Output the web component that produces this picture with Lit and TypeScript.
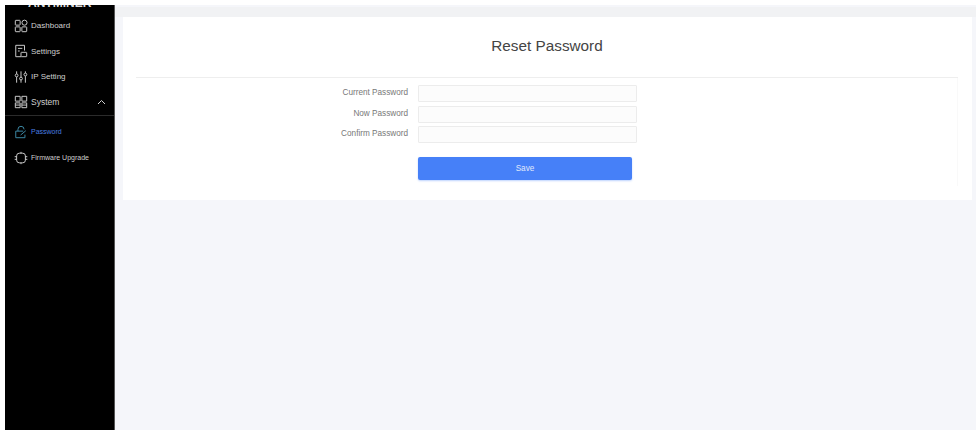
import { LitElement, html, css, svg } from "lit";
import { customElement } from "lit/decorators.js";

const ic = (body: unknown, size = 14) => html`<svg class="ic" width=${size} height=${size} viewBox="0 0 16 16" fill="none" stroke="currentColor" stroke-width="1.1">${body}</svg>`;

const dash = svg`<rect x="1.5" y="1.5" width="5.5" height="5.5" rx=".6"/><circle cx="12" cy="4.2" r="2.9"/><rect x="1.5" y="9" width="5.5" height="5.5" rx=".6"/><rect x="9" y="9" width="5.5" height="5.5" rx=".6"/>`;
const settings = svg`<path d="M8 14.5H2V1.5h10v6"/><path d="M4.5 5h5M4.5 8h2"/><rect x="8" y="9.5" width="6.5" height="5" rx=".5"/>`;
const ip = svg`<path d="M3 1.5v3M3 8v6.5M8 1.5V8M8 11.5v3M13 1.5v2M13 7v7.5"/><circle cx="3" cy="6.2" r="1.6"/><circle cx="8" cy="9.8" r="1.6"/><circle cx="13" cy="5.2" r="1.6"/>`;
const system = svg`<path d="M1.5 7V1.5H7V7zM9 1.5h5.5V7H9zM1.5 9H7v5.5H1.5zM9 14.5V9h5.5v5.5z"/><path d="M1.5 11.5H7M9 11.5h5.5"/>`;
const lock = svg`<path d="M4.5 7V5a3.5 3.5 0 0 1 7 0"/><path d="M10.5 7H2v7.5h10.5V11"/><path d="M7.5 11.5l6-5"/>`;
const chip = svg`<rect x="3" y="2.5" width="10" height="11" rx="3"/><path d="M.8 6.5H3M.8 9.5H3M13 6.5h2.2M13 9.5h2.2M8 1v1.5M8 13.5V15"/>`;

@customElement("app-root")
export class AppRoot extends LitElement {
  static styles = css`
    :host { display: block; width: 979px; height: 433px; background: #fff; overflow: hidden; font-family: "Liberation Sans", Arial, sans-serif; }
    .frame { box-sizing: border-box; height: 433px; padding: 5px 3px 3px 5px; display: flex; }
    .side { width: 109px; flex: none; background: #000; color: #cfcfcf; display: flex; flex-direction: column; overflow: hidden; font-size: 8px; border-right: 1px solid #555; box-sizing: content-box; margin-right: -1px; opacity: .999; }
    .logo { height: 2px; flex: none; padding-left: 23px; overflow: hidden; }
    .logo span { display: block; margin-top: -8px; font-size: 12px; line-height: 12px; font-weight: 700; color: #ddd; white-space: nowrap; }
    .item { display: flex; align-items: center; gap: 3px; height: 25.5px; padding-left: 9px; flex: none; }
    .item.first { margin-top: 6px; }
    .item.sys { height: 25px; font-size: 8.5px; padding-right: 8px; border-bottom: 1px solid #2b2b2b; }
    .sys .chev { margin-left: auto; }
    .sub { display: flex; align-items: center; gap: 3px; height: 26px; padding-left: 9px; font-size: 7px; flex: none; }
    .sub.on { color: #4a7fe0; margin-top: 3px; }
    .sub.on .ic { color: #3d8aa8; }
    .ic { flex: none; display: block; }
    .main { flex: 1; min-width: 0; background: #f5f6fa; display: flex; flex-direction: column; padding: 0 4px 0 9px; }
    .strip { height: 10px; flex: none; background: #f1f2f4; margin: 2px -4px 0 -9px; }
    .card { background: #fff; height: 183px; flex: none; display: flex; flex-direction: column; padding: 0 14px 0 13px; }
    h1 { margin: 0; height: 61px; flex: none; border-bottom: 1px solid #eeeeee; display: flex; align-items: center; justify-content: center; font-size: 15.3px; font-weight: 400; color: #444; box-sizing: border-box; padding-bottom: 2px; }
    .body { height: 108px; flex: none; border-right: 1px solid #f9f9f9; }
    .form { display: grid; grid-template-columns: 272px 219px; column-gap: 10px; row-gap: 3.5px; padding-top: 7px; align-items: center; }
    label { justify-self: end; font-size: 8.2px; color: #777; padding-bottom: 2px; }
    .inp { height: 15px; border: 1px solid #ececec; border-radius: 1px; background: #fcfcfc; }
    button { grid-column: 2; width: 214px; height: 23px; margin-top: 10.5px; border: 0; border-radius: 2px; background: #4680f8; color: #e0e8fb; font: 8.2px "Liberation Sans", Arial, sans-serif; box-shadow: 0 1px 2px rgba(70,128,248,.35); }
  `;

  render() {
    return html`<div class="frame">
      <nav class="side">
        <div class="logo"><span>ANTMINER</span></div>
        <div class="item first">${ic(dash)}Dashboard</div>
        <div class="item">${ic(settings)}Settings</div>
        <div class="item">${ic(ip)}IP Setting</div>
        <div class="item sys">${ic(system)}System<svg class="chev" width="9" height="6" viewBox="0 0 9 6" fill="none" stroke="currentColor"><path d="M1 5l3.5-3.5L8 5"/></svg></div>
        <div class="sub on">${ic(lock)}Password</div>
        <div class="sub">${ic(chip)}Firmware Upgrade</div>
      </nav>
      <main class="main">
        <div class="strip"></div>
        <section class="card">
          <h1>Reset Password</h1>
          <div class="body">
            <div class="form">
              <label>Current Password</label><div class="inp"></div>
              <label>Now Password</label><div class="inp"></div>
              <label>Confirm Password</label><div class="inp"></div>
              <button>Save</button>
            </div>
          </div>
        </section>
      </main>
    </div>`;
  }
}
